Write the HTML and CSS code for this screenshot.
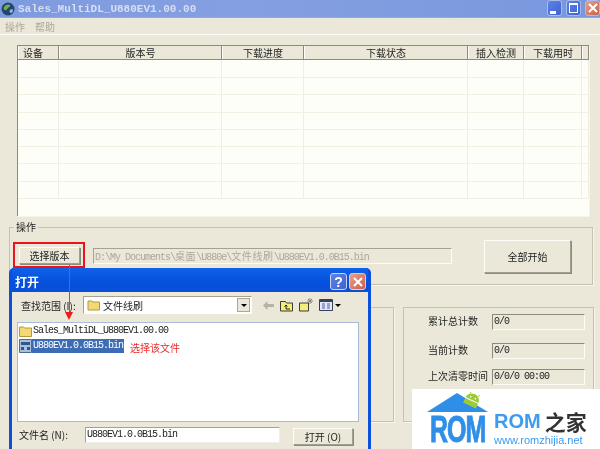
FILE: index.html
```html
<!DOCTYPE html>
<html lang="zh">
<head>
<meta charset="utf-8">
<title>Sales_MultiDL</title>
<link rel="stylesheet" href="styles.css">
</head>
<body>
<div class="window">
  <header class="titlebar">
    <svg class="app-icon" width="14" height="14" viewBox="0 0 14 14"><circle cx="7" cy="7" r="6.500" fill="#23466f"/><path d="M3 5c2-3 5-3 6-2s-1 2-2 3-2 3-3 2-2-1-1-3z" fill="#6fb04c"/><path d="M9 8c1-1 3-1 3 0s-1 3-2 3-2-2-1-3z" fill="#8fc0e8"/></svg>
    <span class="title-text">Sales_MultiDL_U880EV1.00.00</span>
    <span class="win-btns">
      <span class="wbtn wbtn-blue"><i class="min-mark"></i></span>
      <span class="wbtn wbtn-blue"><i class="max-mark"></i></span>
      <span class="wbtn wbtn-red">
        <svg width="12" height="12" viewBox="0 0 12 12"><path d="M2 2l8 8M10 2l-8 8" stroke="#fff" stroke-width="2"/></svg>
      </span>
    </span>
  </header>
  <nav class="menubar"><span>操作</span><span>帮助</span></nav>

  <main class="content">
    <section class="list">
      <div class="list-row list-head">
        <span class="c1">设备</span><span class="c2">版本号</span><span class="c3">下载进度</span><span class="c4">下载状态</span><span class="c5">插入检测</span><span class="c6">下载用时</span><span class="c7"></span>
      </div>
      <div class="list-row"><span class="c1"></span><span class="c2"></span><span class="c3"></span><span class="c4"></span><span class="c5"></span><span class="c6"></span><span class="c7"></span></div>
      <div class="list-row"><span class="c1"></span><span class="c2"></span><span class="c3"></span><span class="c4"></span><span class="c5"></span><span class="c6"></span><span class="c7"></span></div>
      <div class="list-row"><span class="c1"></span><span class="c2"></span><span class="c3"></span><span class="c4"></span><span class="c5"></span><span class="c6"></span><span class="c7"></span></div>
      <div class="list-row"><span class="c1"></span><span class="c2"></span><span class="c3"></span><span class="c4"></span><span class="c5"></span><span class="c6"></span><span class="c7"></span></div>
      <div class="list-row"><span class="c1"></span><span class="c2"></span><span class="c3"></span><span class="c4"></span><span class="c5"></span><span class="c6"></span><span class="c7"></span></div>
      <div class="list-row"><span class="c1"></span><span class="c2"></span><span class="c3"></span><span class="c4"></span><span class="c5"></span><span class="c6"></span><span class="c7"></span></div>
      <div class="list-row"><span class="c1"></span><span class="c2"></span><span class="c3"></span><span class="c4"></span><span class="c5"></span><span class="c6"></span><span class="c7"></span></div>
      <div class="list-row"><span class="c1"></span><span class="c2"></span><span class="c3"></span><span class="c4"></span><span class="c5"></span><span class="c6"></span><span class="c7"></span></div>
    </section>

    <section class="group ops">
      <span class="legend">操作</span>
      <div class="ops-row">
        <span class="red-box"><button class="btn btn-small">选择版本</button></span>
        <div class="path-input">D:\My Documents\<span class="cjk">桌面</span>\U880e\<span class="cjk">文件线刷</span>\U880EV1.0.0B15.bin</div>
        <button class="btn btn-big">全部开始</button>
      </div>
    </section>

    <div class="lower">
      <section class="group side-group"></section>
      <section class="group counters">
        <div class="count-row"><span class="count-label">累计总计数</span><span class="count-val">0/0</span></div>
        <div class="count-row"><span class="count-label">当前计数</span><span class="count-val">0/0</span></div>
        <div class="count-row"><span class="count-label">上次清零时间</span><span class="count-val">0/0/0 00:00</span></div>
      </section>
    </div>
  </main>

  <section class="dialog">
    <header class="dlg-title">
      <span class="dlg-title-text">打开</span>
      <span class="dlg-btns">
        <span class="wbtn wbtn-blue dlg-help">?</span>
        <span class="wbtn wbtn-red"><svg width="12" height="12" viewBox="0 0 12 12"><path d="M2 2l8 8M10 2l-8 8" stroke="#fff" stroke-width="2"/></svg></span>
      </span>
    </header>
    <div class="dlg-body">
      <div class="dlg-tools">
        <span class="dlg-label">查找范围 (I):</span>
        <div class="combo">
          <svg width="14" height="12" viewBox="0 0 14 12"><path d="M1 2h4l1 1h6.500v8H1z" fill="#f3d873" stroke="#b8963a"/></svg>
          <span class="combo-text">文件线刷</span>
          <span class="combo-arrow"><i></i></span>
        </div>
        <span class="tool-icons">
          <svg width="11" height="9" viewBox="0 0 11 9"><path d="M0 4.500L4.500 0v3H11v3H4.500v3z" fill="#b5b2a6"/></svg>
          <svg width="13" height="13" viewBox="0 0 13 13"><path d="M.500 2.500h5l1 1.500h6v8H.500z" fill="#f1ee7e" stroke="#3c3c28"/><path d="M6 10V6M4.500 7.500L6 6l1.500 1.500M6 10h4" stroke="#222" fill="none"/></svg>
          <svg width="14" height="14" viewBox="0 0 14 14"><path d="M.500 5h9v8h-9z" fill="#f1ee7e" stroke="#3c3c28"/><path d="M11 0v6M8 3h6M9 1l4 4M13 1L9 5" stroke="#8a8a80"/></svg>
          <span class="view-icon"><svg width="14" height="12" viewBox="0 0 14 12"><path d="M.500.500h13v11H.500z" fill="#e8e8f4" stroke="#33415f"/><path d="M1 1h12v2H1z" fill="#33415f"/><path d="M3 5h3M3 7h3M3 9h3M8 5h3M8 7h3M8 9h3" stroke="#4a5fae"/></svg><i></i></span>
        </span>
      </div>
      <div class="file-list">
        <div class="file-row">
          <svg width="13" height="12" viewBox="0 0 13 12"><path d="M.500 2h4l1 1h7v8.500H.500z" fill="#f3d873" stroke="#b8963a"/></svg>
          <span class="file-name">Sales_MultiDL_U880EV1.00.00</span>
        </div>
        <div class="file-row">
          <svg class="file-ico" width="13" height="14" viewBox="0 0 13 14"><path d="M.500.500h12v13H.500z" fill="#a9c0dd" stroke="#4b6a9a"/><path d="M2 3h9v3H2z" fill="#31558f"/><path d="M2 8h3v3H2zM8 8h3v3H8z" fill="#31558f"/></svg>
          <span class="file-name selected">U880EV1.0.0B15.bin</span>
          <span class="note">选择该文件</span>
        </div>
      </div>
      <div class="dlg-name-row">
        <span class="dlg-name-label">文件名 (N):</span>
        <div class="name-input">U880EV1.0.0B15.bin</div>
        <button class="btn btn-open">打开 (O)</button>
      </div>
      <div class="dlg-type-row"><div class="type-input"></div></div>
    </div>
  </section>
  <div class="arrow-line"></div>

  <aside class="watermark">
    <div class="wm-house">
      <svg class="wm-roof" width="62" height="23" viewBox="0 0 62 23">
        <path d="M0 20L30 1l31 19z" fill="#2f8fe8"/>
        <g transform="rotate(25 45 8)"><path d="M38 8a7 6.500 0 0 1 14 0z" fill="#9ccb3a"/><path d="M38 9h14v5H38z" fill="#9ccb3a"/><path d="M41 2.500l-1-2M49 2.500l1-2" stroke="#9ccb3a"/><circle cx="42.500" cy="5.500" r=".8" fill="#fff"/><circle cx="47.500" cy="5.500" r=".8" fill="#fff"/></g>
      </svg>
      <span class="wm-rom">ROM</span>
    </div>
    <div class="wm-side">
      <div class="wm-brand"><span class="wm-rom2">ROM</span><span class="wm-zh">之家</span></div>
      <div class="wm-url">www.romzhijia.net</div>
    </div>
  </aside>
</div>
</body>
</html>
```

FILE: styles.css
```css
* { box-sizing: border-box; }
html, body { margin: 0; padding: 0; background: #ece9d8; }
body { font-family: "Noto Sans CJK SC", "Liberation Sans", sans-serif; font-size: 10px; color: #222; }
.window { width: 600px; height: 449px; overflow: hidden; position: relative; background: #ebe8d9; filter: blur(0.3px); }

.titlebar { height: 18px; display: flex; align-items: center; padding-left: 1px;
  background: linear-gradient(90deg, #7f9bdf 0%, #84a0e2 40%, #7997dd 100%); border-bottom: 1px solid #93a8df; }
.app-icon { flex: none; }
.title-text { margin-left: 3px; font-family: "Liberation Mono", monospace; font-size: 11px; font-weight: bold; color: #d6def2; }
.win-btns { margin-left: auto; display: flex; gap: 4px; align-self: flex-start; }
.wbtn { width: 17px; height: 17px; border-radius: 3px; display: flex; align-items: center; justify-content: center; border: 1px solid #c9d4f2; }
.wbtn-blue { background: linear-gradient(135deg, #5f82e8, #3e62d0); }
.wbtn-red { background: linear-gradient(135deg, #e9a08c, #c9604a); }
.titlebar .wbtn { border-color: #a9bbea; width: 15px; height: 16px; }
.min-mark { width: 6px; height: 3px; background: #fff; margin: 8px 4px 0 0; }
.max-mark { width: 9px; height: 10px; border: 1px solid #fff; border-top-width: 2px; }

.menubar { height: 17px; display: flex; gap: 10px; padding: 2px 5px 0; color: #aca899; font-size: 10px; line-height: 14px;
  border-bottom: 1px solid #fdfcf6; }

.content { padding: 10px 6px 0 9px; }
.list { width: 572px; margin-left: 8px; height: 171px; background: #fefef8; border-left: 1px solid #8d8b7e; border-top: 1px solid #8d8b7e; box-shadow: 1px 1px 0 #f7f5ea; overflow: hidden; }
.list-row { display: flex; height: 17.3px; border-bottom: 1px solid #f2efe3; }
.list-row span { display: block; height: 100%; border-right: 1px solid #f0eee2; flex: none; }
.list-head { height: 14px; background: #ebe8d9; border-bottom: 1px solid #8d8b7e; }
.list-head + .list-row { height: 18px; }
.list-head span { text-align: center; line-height: 13px; font-size: 10px; color: #222; border-right: 1px solid #8d8b7e; border-left: 1px solid #fdfcf6; }
.list-head .c1 { text-align: left; padding-left: 4px; }
.c1 { width: 41px; } .c2 { width: 163px; } .c3 { width: 82px; } .c4 { width: 164px; } .c5 { width: 56px; } .c6 { width: 58px; } .c7 { width: 7px; }

.group { position: relative; border: 1px solid #c5c2b0; box-shadow: 1px 1px 0 #f8f6ec; }
.legend { position: absolute; left: 4px; top: -8px; padding: 0 2px; background: #ebe8d9; font-size: 10px; line-height: 14px; }
.ops { margin-top: 11px; height: 58px; width: 584px; }
.ops-row { display: flex; align-items: flex-start; padding: 14px 0 0 3px; }
.red-box { border: 2px solid #e8161c; padding: 3px 4px; width: 72px; height: 26px; display: block; flex: none; }
.btn { font-family: inherit; font-size: 10px; color: #222; background: #ebe8d9; padding: 0; border: 1px solid; border-color: #fdfcf6 #a09e90 #a09e90 #fdfcf6; box-shadow: 1px 1px 0 #8d8b7e; display: block; flex: none; }
.btn-small { width: 61px; height: 17px; line-height: 14px; }
.path-input { margin: 6px 0 0 8px; width: 359px; height: 16px; border: 1px solid; border-color: #a5a294 #fdfcf6 #fdfcf6 #a5a294; color: #aca899; font-family: "Liberation Mono", "Noto Sans CJK SC", monospace; font-size: 10px; letter-spacing: -1px; line-height: 14px; padding-left: 1px; white-space: nowrap; overflow: hidden; }
.cjk { letter-spacing: 0.6px; font-family: "Noto Sans CJK SC", sans-serif; }
.btn-big { width: 87px; height: 33px; margin: -2px 0 0 32px; }

.lower { display: flex; justify-content: flex-end; gap: 9px; margin-top: 22px; }
.side-group { width: 380px; height: 115px; }
.counters { width: 191px; height: 115px; padding: 6px 0 0 24px; }
.count-row { display: flex; align-items: center; height: 16px; margin-bottom: 13px; }
.count-row:nth-child(2) { margin-bottom: 10px; }
.count-label { width: 64px; font-size: 10px; color: #222; white-space: nowrap; padding-bottom: 3px; }
.count-val { width: 93px; height: 16px; border: 1px solid; border-color: #8d8b7e #fdfcf6 #fdfcf6 #8d8b7e; font-family: "Liberation Mono", monospace; font-size: 10px; letter-spacing: -1px; line-height: 13px; padding-left: 1px; white-space: nowrap; }

.arrow-line { position: absolute; z-index: 2; left: 69px; top: 265px; width: 1px; height: 47px; background: #e8383c; }
.arrow-line::after { content: ""; position: absolute; left: -4px; top: 47px; border: 4.500px solid transparent; border-top: 8px solid #ee1a1e; border-bottom: 0; }

.dialog { position: absolute; left: 9px; top: 268px; width: 362px; height: 181px; background: #0a4fe0; border-radius: 5px 5px 0 0; padding: 0 3px; z-index: 1; }
.dlg-title { height: 24px; display: flex; align-items: center; padding: 3px 2px 0 3px; background: linear-gradient(180deg, #0f62e8 0%, #0550dd 60%, #0a4fd8 100%); }
.dlg-title-text { color: #fff; font-size: 12px; font-weight: bold; }
.dlg-btns { margin-left: auto; display: flex; gap: 2px; }
.dlg-help { color: #fff; font: bold 14px "Liberation Sans", sans-serif; }
.dlg-body { background: #ebe8d9; height: 157px; padding: 4px 0 0 5px; }
.dlg-tools { display: flex; align-items: center; height: 18px; }
.dlg-label { width: 66px; padding-left: 4px; font-size: 10px; white-space: nowrap; }
.combo { width: 169px; height: 18px; background: #fff; border: 1px solid; border-color: #a5a294 #fdfcf6 #fdfcf6 #a5a294; display: flex; align-items: center; padding-left: 3px; gap: 2px; }
.combo-text { font-size: 10px; }
.combo-arrow { margin-left: auto; width: 13px; height: 14px; background: #ebe8d9; border: 1px solid #aca899; display: flex; align-items: center; justify-content: center; margin-right: 1px; }
.combo-arrow i, .view-icon i { width: 0; height: 0; border: 3px solid transparent; border-top: 3px solid #000; border-bottom: 0; display: block; }
.tool-icons { display: flex; align-items: center; gap: 6px; margin-left: 11px; }
.view-icon { display: flex; align-items: center; gap: 2px; }
.file-list { width: 342px; height: 100px; margin-top: 8px; background: #fff; border: 1px solid #a9bdd8; padding-left: 1px; }
.file-row { display: flex; align-items: center; height: 15px; font-family: "Liberation Mono", monospace; font-size: 10px; letter-spacing: -1px; color: #222; }
.file-name { margin-left: 0; padding: 0 1px; line-height: 14px; }
.selected { background: #3c6cb4; color: #fff; }
.note { font-family: "Noto Sans CJK SC", sans-serif; font-size: 10px; letter-spacing: 0; color: #ee2a2a; margin: 3px 0 0 6px; }
.dlg-name-row { display: flex; align-items: flex-start; margin-top: 5px; }
.dlg-name-label { width: 68px; font-size: 10px; line-height: 16px; padding-left: 2px; white-space: nowrap; }
.name-input { width: 195px; height: 16px; background: #fff; border: 1px solid; border-color: #a5a294 #eee #eee #a5a294; font-family: "Liberation Mono", monospace; font-size: 10px; letter-spacing: -1px; line-height: 14px; padding-left: 1px; }
.btn-open { width: 60px; height: 17px; margin: 1px 0 0 13px; }
.dlg-type-row { display: flex; margin-top: 4px; padding-left: 68px; }
.type-input { width: 195px; height: 16px; border: 1px solid #a5a294; background: #ebe8d9; }

.watermark { position: absolute; left: 412px; top: 389px; width: 188px; height: 60px; background: #fff; display: flex; z-index: 3; padding-left: 15px; }
.wm-house { width: 62px; position: relative; flex: none; }
.wm-roof { position: absolute; left: 0; top: 3px; }
.wm-rom { position: absolute; left: 3px; top: 26px; width: 54px; height: 29px; text-align: center; font: bold 25px/29px "Liberation Sans", sans-serif; color: #2f8fe8; letter-spacing: -1px; -webkit-text-stroke: 0.6px #2f8fe8; transform: scaleY(1.5); white-space: nowrap; }
.wm-side { margin-left: 5px; padding-top: 21px; }
.wm-brand { display: flex; align-items: center; height: 22px; gap: 4px; }
.wm-rom2 { font: bold 20px/20px "Liberation Sans", sans-serif; color: #3f9bee; }
.wm-zh { font: bold 21px/22px "Noto Sans CJK SC", sans-serif; color: #333; letter-spacing: 0; }
.wm-url { font: 11px/12px "Liberation Sans", sans-serif; color: #3f9bee; margin-top: 2px; white-space: nowrap; }
```
